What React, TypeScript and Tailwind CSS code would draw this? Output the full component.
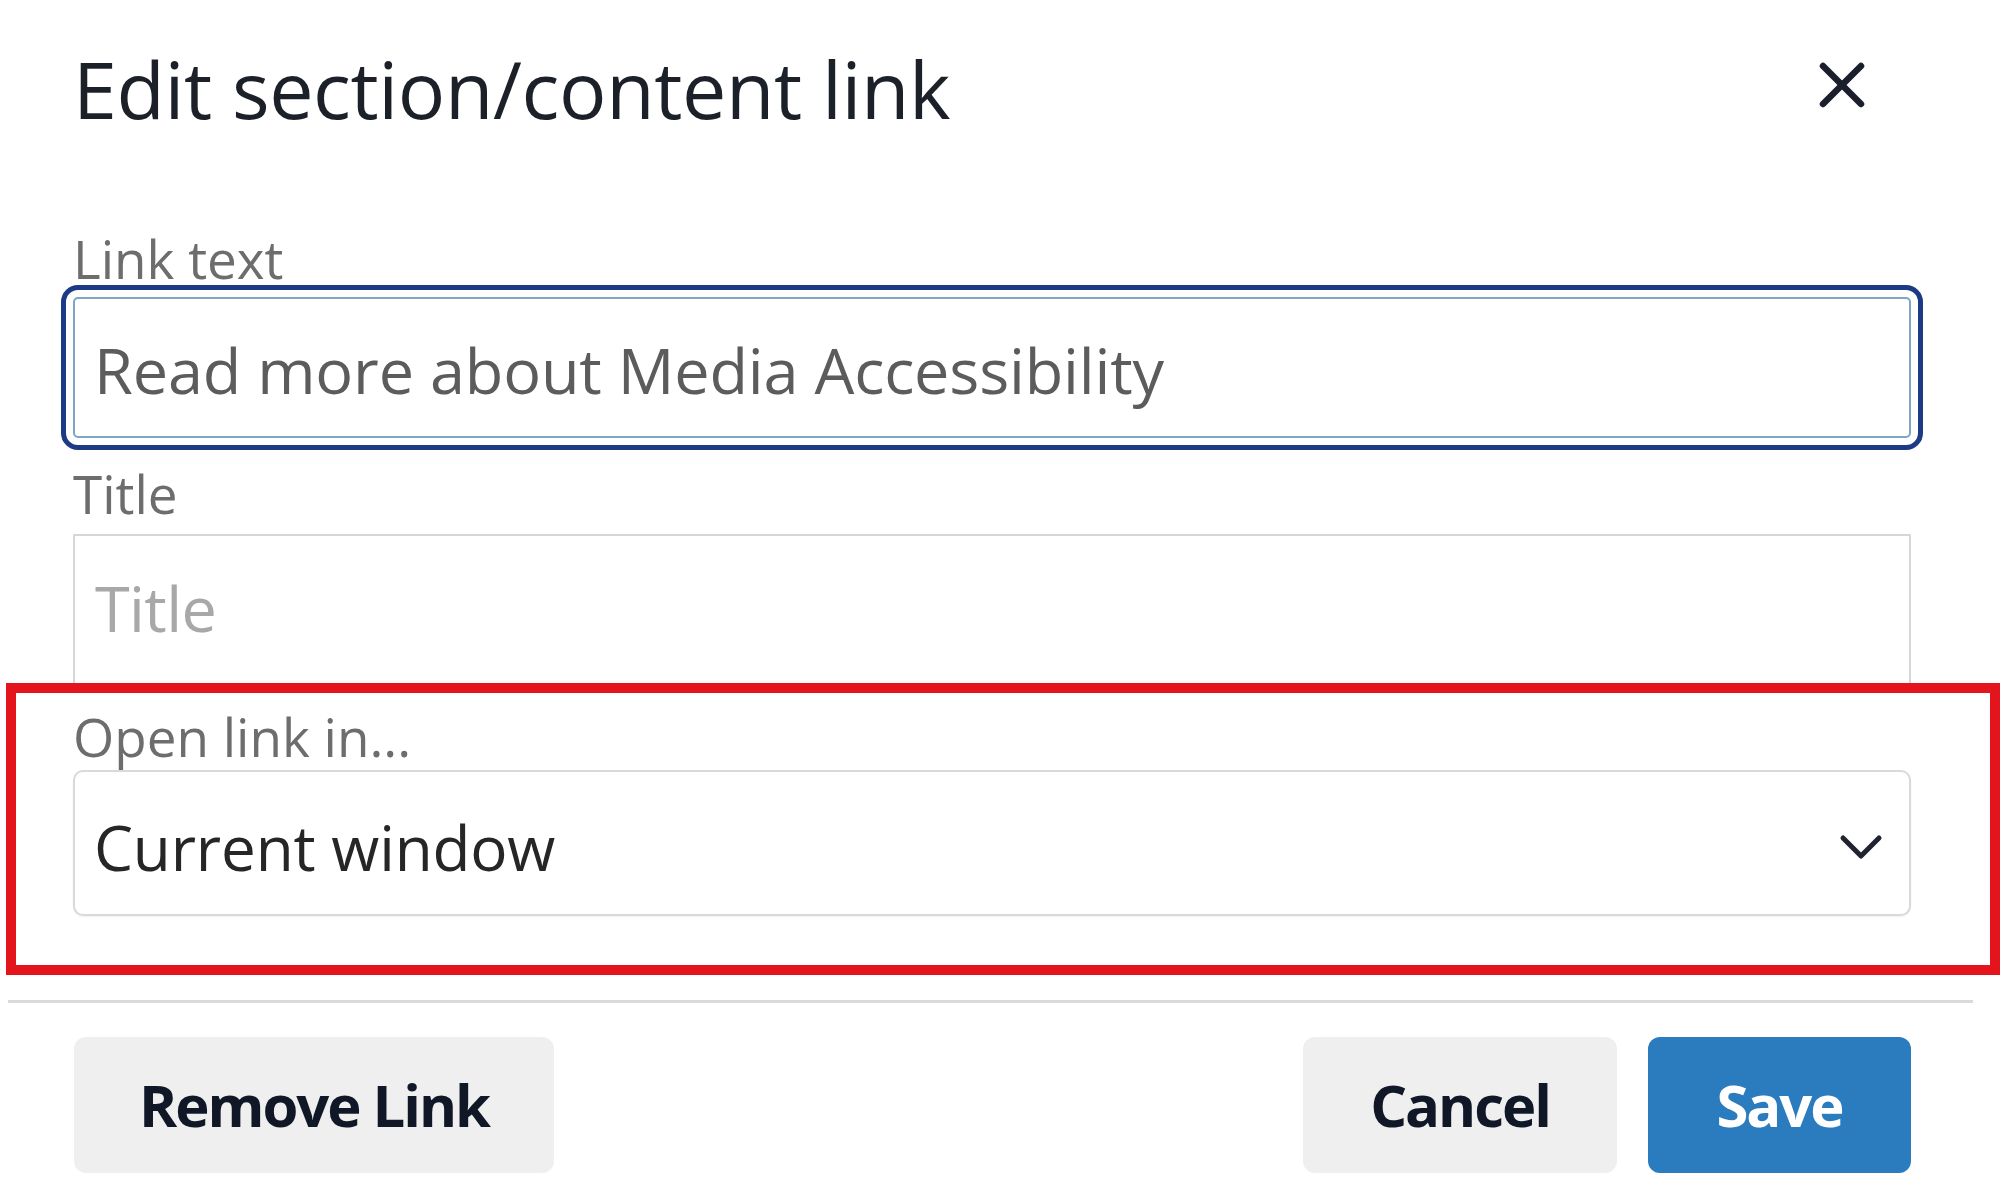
function CloseIcon() {
  return (
    <svg width="46" height="46" viewBox="0 0 46 46" fill="none" stroke="#1a1f2b" strokeWidth="6.5" strokeLinecap="round">
      <line x1="4" y1="4" x2="42" y2="42" />
      <line x1="42" y1="4" x2="4" y2="42" />
    </svg>
  )
}

function Chevron() {
  return (
    <svg width="44" height="28" viewBox="0 0 44 28" fill="none" stroke="#1f2430" strokeWidth="5" strokeLinecap="round" strokeLinejoin="round">
      <polyline points="4,5 22,23 40,5" />
    </svg>
  )
}

export default function App() {
  return (
    <div className="relative w-[2000px] h-[1200px] overflow-hidden bg-white font-['Open_Sans',sans-serif]">
      <div className="flex flex-col pl-[73px] pr-[89px]">
        <header className="flex items-start justify-between pt-[49px] pr-[46px]">
          <h2 className="text-[79px] leading-none tracking-[-0.005em] text-[#1c2029]">
            Edit section/content link
          </h2>
          <button className="mt-[13px]" aria-label="Close">
            <CloseIcon />
          </button>
        </header>

        <label className="mt-[104px] text-[53px] leading-none text-[#6d6d6d]">Link text</label>
        <div className="mt-[12px] h-[141px] flex items-center pt-[4px] pl-[19px] border-2 border-[#7ea6c2] rounded-[5px] outline-[5px] outline-solid outline-[#1d3a84] outline-offset-[7px]">
          <span className="text-[63px] leading-none tracking-[-0.003em] text-[#5c5c5c]">
            Read more about Media Accessibility
          </span>
        </div>

        <label className="mt-[29px] text-[53px] leading-none text-[#6d6d6d]">Title</label>
        <div className="mt-[14px] h-[150px] flex items-center pb-[6px] pl-[20px] border-2 border-b-0 border-[#d6d6d6] rounded-t-[2px]">
          <span className="text-[63px] leading-none tracking-[-0.01em] text-[#a8a8a8]">Title</span>
        </div>

        <label className="mt-[26px] text-[53px] leading-none text-[#6d6d6d]">Open link in...</label>
        <div className="mt-[7px] h-[146px] flex items-center justify-between pt-[8px] pl-[19px] pr-[26px] border-2 border-[#d9d9d9] rounded-[10px] shadow-[0_1px_2px_rgba(0,0,0,0.06)]">
          <span className="text-[62px] leading-none tracking-[-0.003em] text-[#262626]">Current window</span>
          <Chevron />
        </div>
      </div>

      <div className="mt-[84px] ml-[8px] w-[1965px] h-[3px] bg-[#dadada]" />

      <div className="mt-[34px] flex items-center justify-between pl-[74px] pr-[89px]">
        <button className="w-[480px] h-[136px] flex items-center justify-center rounded-[12px] bg-[#efefef] text-[58px] font-bold leading-none tracking-[-0.035em] text-[#101828]">
          Remove Link
        </button>
        <div className="flex items-center gap-[31px]">
          <button className="w-[314px] h-[136px] flex items-center justify-center rounded-[12px] bg-[#efefef] text-[58px] font-bold leading-none tracking-[-0.035em] text-[#101828]">
            Cancel
          </button>
          <button className="w-[263px] h-[136px] flex items-center justify-center rounded-[12px] bg-[#2b7bbf] text-[58px] font-bold leading-none tracking-[-0.035em] text-white">
            Save
          </button>
        </div>
      </div>

      <div className="absolute left-[6px] top-[683px] w-[1994px] h-[292px] border-[10px] border-[#e3141b] pointer-events-none" />
    </div>
  )
}
